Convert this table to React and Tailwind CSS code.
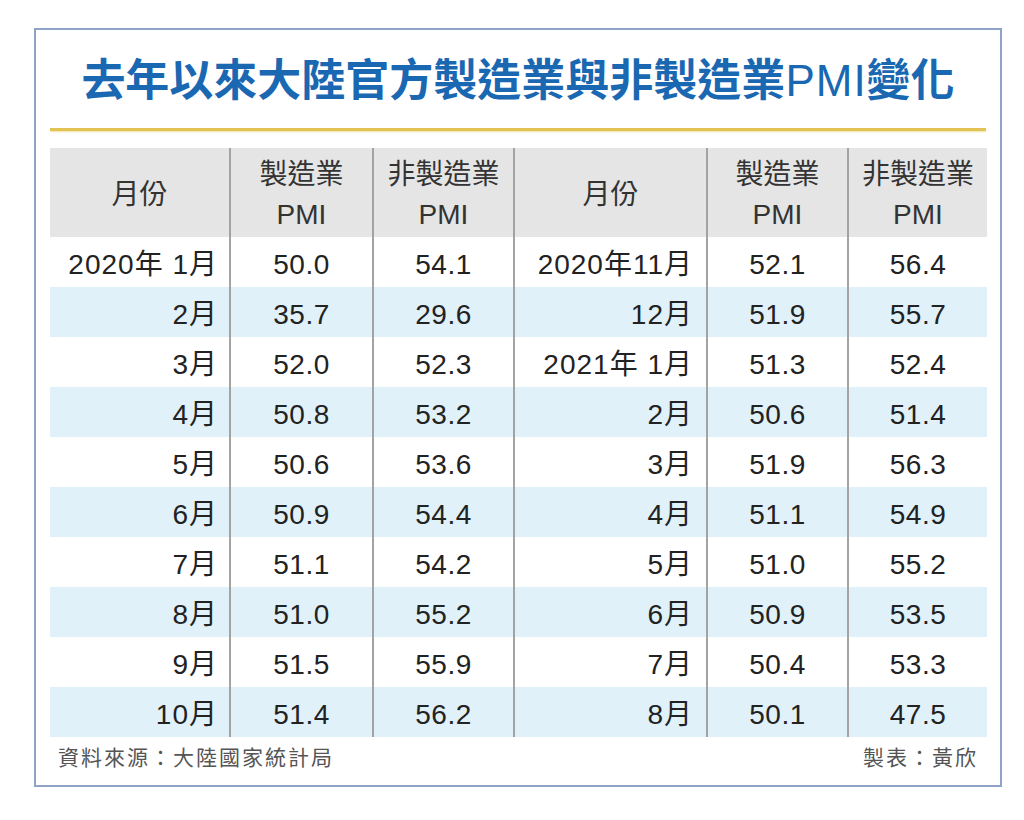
import React from "react";

const left = [
  ["2020年 1月", "50.0", "54.1"],
  ["2月", "35.7", "29.6"],
  ["3月", "52.0", "52.3"],
  ["4月", "50.8", "53.2"],
  ["5月", "50.6", "53.6"],
  ["6月", "50.9", "54.4"],
  ["7月", "51.1", "54.2"],
  ["8月", "51.0", "55.2"],
  ["9月", "51.5", "55.9"],
  ["10月", "51.4", "56.2"],
];

const right = [
  ["2020年11月", "52.1", "56.4"],
  ["12月", "51.9", "55.7"],
  ["2021年 1月", "51.3", "52.4"],
  ["2月", "50.6", "51.4"],
  ["3月", "51.9", "56.3"],
  ["4月", "51.1", "54.9"],
  ["5月", "51.0", "55.2"],
  ["6月", "50.9", "53.5"],
  ["7月", "50.4", "53.3"],
  ["8月", "50.1", "47.5"],
];

const font = {
  fontFamily: '"Liberation Sans", "Noto Sans CJK TC", sans-serif',
};

const HeadCell = ({ top, bottom, line }) => (
  <div
    className={`h-[89px] pt-[5px] bg-[#e5e5e5] flex flex-col items-center justify-center leading-[40px] text-[28px] text-[#333] ${
      line ? "border-l-2 border-[#a3a3a3]" : ""
    }`}
  >
    <span>{top}</span>
    {bottom && <span>{bottom}</span>}
  </div>
);

const Row = ({ l, r, shade }) => {
  const bg = shade ? "bg-[#e0f1fa]" : "bg-white";
  const cell = "flex items-center h-[50px] pt-[5px] text-[28px] text-[#222]";
  return (
    <>
      <div className={`${cell} ${bg} justify-end pr-[11px] tracking-[1px]`}>{l[0]}</div>
      <div className={`${cell} ${bg} justify-center tracking-[0.5px] border-l-2 border-[#a3a3a3]`}>{l[1]}</div>
      <div className={`${cell} ${bg} justify-center tracking-[0.5px] border-l-2 border-[#a3a3a3]`}>{l[2]}</div>
      <div className={`${cell} ${bg} justify-end pr-[13px] tracking-[1px] border-l-2 border-[#a3a3a3]`}>{r[0]}</div>
      <div className={`${cell} ${bg} justify-center tracking-[0.5px] border-l-2 border-[#a3a3a3]`}>{r[1]}</div>
      <div className={`${cell} ${bg} justify-center tracking-[0.5px] border-l-2 border-[#a3a3a3]`}>{r[2]}</div>
    </>
  );
};

export default function App() {
  return (
    <div className="min-h-[820px] bg-white pt-[28px] pl-[34px]" style={font}>
      <div className="w-[968px] border-2 border-[#8fa3c6] bg-white px-[14px]">
        {/* title */}
        <h1 className="pt-[29px] text-center text-[44px] leading-[44px] font-bold text-[#1a68b2]">
          去年以來大陸官方製造業與非製造業
          <span className="font-normal tracking-[1px]">PMI</span>
          變化
        </h1>
        <div className="mt-[25px] h-[3px] bg-[#e2c353] shadow-[0_1px_2px_#efe2a8]" />

        {/* table */}
        <div className="mt-[17px] grid grid-cols-[179px_143px_141px_193px_141px_140px]">
          <HeadCell top="月份" />
          <HeadCell top="製造業" bottom="PMI" line />
          <HeadCell top="非製造業" bottom="PMI" line />
          <HeadCell top="月份" line />
          <HeadCell top="製造業" bottom="PMI" line />
          <HeadCell top="非製造業" bottom="PMI" line />
          {left.map((l, i) => (
            <Row key={i} l={l} r={right[i]} shade={i % 2 === 1} />
          ))}
        </div>

        {/* footer */}
        <div className="flex justify-between h-[48px] pt-[8px] px-[8px] text-[21px] leading-[26px] tracking-[2px] text-[#555]">
          <span>資料來源：大陸國家統計局</span>
          <span>製表：黃欣</span>
        </div>
      </div>
    </div>
  );
}
